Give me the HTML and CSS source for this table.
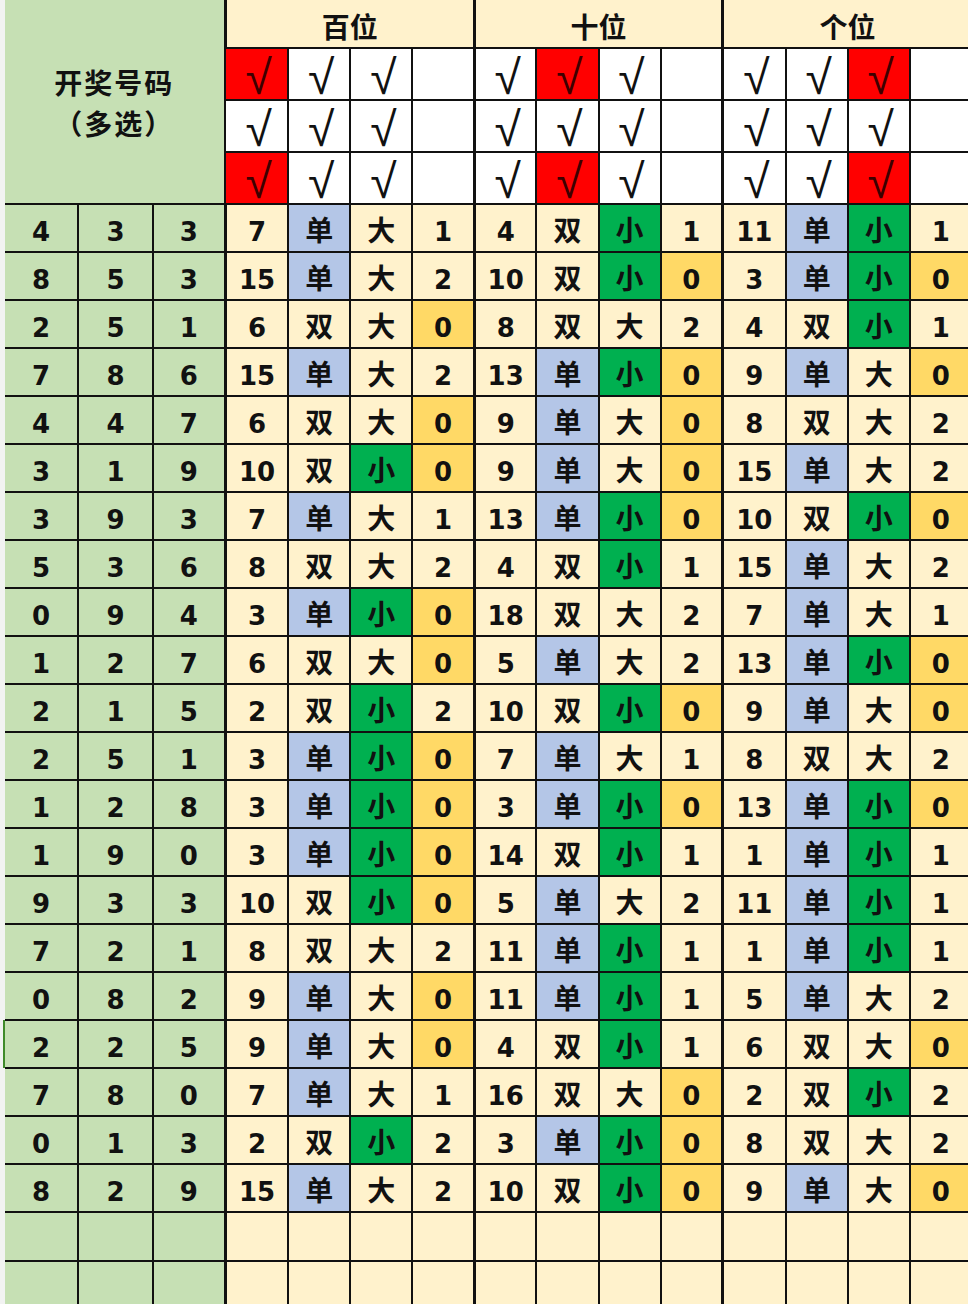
FILE: index.html
```html
<!DOCTYPE html>
<html lang="zh">
<head>
<meta charset="utf-8">
<title>开奖号码</title>
<link rel="stylesheet" href="styles.css">
</head>
<body>
<table class="sheet">
<colgroup>
<col class="w73"><col class="w75"><col class="w72">
<col class="w63"><col class="w62"><col class="w62"><col class="w62">
<col class="w62"><col class="w62"><col class="w62"><col class="w62">
<col class="w63"><col class="w62"><col class="w62"><col class="w62">
</colgroup>
<tbody>
<tr class="hd">
<td class="title" rowspan="4" colspan="3">开奖号码<br>（多选）</td>
<td class="grp s" colspan="4">百位</td>
<td class="grp s" colspan="4">十位</td>
<td class="grp s" colspan="4">个位</td>
</tr>
<tr class="ck">
<td class="r s">√</td><td class="w">√</td><td class="w">√</td><td class="w"></td>
<td class="w s">√</td><td class="r">√</td><td class="w">√</td><td class="w"></td>
<td class="w s">√</td><td class="w">√</td><td class="r">√</td><td class="w"></td>
</tr>
<tr class="ck">
<td class="w s">√</td><td class="w">√</td><td class="w">√</td><td class="w"></td>
<td class="w s">√</td><td class="w">√</td><td class="w">√</td><td class="w"></td>
<td class="w s">√</td><td class="w">√</td><td class="w">√</td><td class="w"></td>
</tr>
<tr class="ck">
<td class="r s">√</td><td class="w">√</td><td class="w">√</td><td class="w"></td>
<td class="w s">√</td><td class="r">√</td><td class="w">√</td><td class="w"></td>
<td class="w s">√</td><td class="w">√</td><td class="r">√</td><td class="w"></td>
</tr>

<tr class="d"><td class="g">4</td><td class="g">3</td><td class="g">3</td>
<td class="c s">7</td><td class="b h">单</td><td class="c h">大</td><td class="c">1</td>
<td class="c s">4</td><td class="c h">双</td><td class="k h">小</td><td class="c">1</td>
<td class="c s">11</td><td class="b h">单</td><td class="k h">小</td><td class="c">1</td></tr>

<tr class="d"><td class="g">8</td><td class="g">5</td><td class="g">3</td>
<td class="c s">15</td><td class="b h">单</td><td class="c h">大</td><td class="c">2</td>
<td class="c s">10</td><td class="c h">双</td><td class="k h">小</td><td class="y">0</td>
<td class="c s">3</td><td class="b h">单</td><td class="k h">小</td><td class="y">0</td></tr>

<tr class="d"><td class="g">2</td><td class="g">5</td><td class="g">1</td>
<td class="c s">6</td><td class="c h">双</td><td class="c h">大</td><td class="y">0</td>
<td class="c s">8</td><td class="c h">双</td><td class="c h">大</td><td class="c">2</td>
<td class="c s">4</td><td class="c h">双</td><td class="k h">小</td><td class="c">1</td></tr>

<tr class="d"><td class="g">7</td><td class="g">8</td><td class="g">6</td>
<td class="c s">15</td><td class="b h">单</td><td class="c h">大</td><td class="c">2</td>
<td class="c s">13</td><td class="b h">单</td><td class="k h">小</td><td class="y">0</td>
<td class="c s">9</td><td class="b h">单</td><td class="c h">大</td><td class="y">0</td></tr>

<tr class="d"><td class="g">4</td><td class="g">4</td><td class="g">7</td>
<td class="c s">6</td><td class="c h">双</td><td class="c h">大</td><td class="y">0</td>
<td class="c s">9</td><td class="b h">单</td><td class="c h">大</td><td class="y">0</td>
<td class="c s">8</td><td class="c h">双</td><td class="c h">大</td><td class="c">2</td></tr>

<tr class="d"><td class="g">3</td><td class="g">1</td><td class="g">9</td>
<td class="c s">10</td><td class="c h">双</td><td class="k h">小</td><td class="y">0</td>
<td class="c s">9</td><td class="b h">单</td><td class="c h">大</td><td class="y">0</td>
<td class="c s">15</td><td class="b h">单</td><td class="c h">大</td><td class="c">2</td></tr>

<tr class="d"><td class="g">3</td><td class="g">9</td><td class="g">3</td>
<td class="c s">7</td><td class="b h">单</td><td class="c h">大</td><td class="c">1</td>
<td class="c s">13</td><td class="b h">单</td><td class="k h">小</td><td class="y">0</td>
<td class="c s">10</td><td class="c h">双</td><td class="k h">小</td><td class="y">0</td></tr>

<tr class="d"><td class="g">5</td><td class="g">3</td><td class="g">6</td>
<td class="c s">8</td><td class="c h">双</td><td class="c h">大</td><td class="c">2</td>
<td class="c s">4</td><td class="c h">双</td><td class="k h">小</td><td class="c">1</td>
<td class="c s">15</td><td class="b h">单</td><td class="c h">大</td><td class="c">2</td></tr>

<tr class="d"><td class="g">0</td><td class="g">9</td><td class="g">4</td>
<td class="c s">3</td><td class="b h">单</td><td class="k h">小</td><td class="y">0</td>
<td class="c s">18</td><td class="c h">双</td><td class="c h">大</td><td class="c">2</td>
<td class="c s">7</td><td class="b h">单</td><td class="c h">大</td><td class="c">1</td></tr>

<tr class="d"><td class="g">1</td><td class="g">2</td><td class="g">7</td>
<td class="c s">6</td><td class="c h">双</td><td class="c h">大</td><td class="y">0</td>
<td class="c s">5</td><td class="b h">单</td><td class="c h">大</td><td class="c">2</td>
<td class="c s">13</td><td class="b h">单</td><td class="k h">小</td><td class="y">0</td></tr>

<tr class="d"><td class="g">2</td><td class="g">1</td><td class="g">5</td>
<td class="c s">2</td><td class="c h">双</td><td class="k h">小</td><td class="c">2</td>
<td class="c s">10</td><td class="c h">双</td><td class="k h">小</td><td class="y">0</td>
<td class="c s">9</td><td class="b h">单</td><td class="c h">大</td><td class="y">0</td></tr>

<tr class="d"><td class="g">2</td><td class="g">5</td><td class="g">1</td>
<td class="c s">3</td><td class="b h">单</td><td class="k h">小</td><td class="y">0</td>
<td class="c s">7</td><td class="b h">单</td><td class="c h">大</td><td class="c">1</td>
<td class="c s">8</td><td class="c h">双</td><td class="c h">大</td><td class="c">2</td></tr>

<tr class="d"><td class="g">1</td><td class="g">2</td><td class="g">8</td>
<td class="c s">3</td><td class="b h">单</td><td class="k h">小</td><td class="y">0</td>
<td class="c s">3</td><td class="b h">单</td><td class="k h">小</td><td class="y">0</td>
<td class="c s">13</td><td class="b h">单</td><td class="k h">小</td><td class="y">0</td></tr>

<tr class="d"><td class="g">1</td><td class="g">9</td><td class="g">0</td>
<td class="c s">3</td><td class="b h">单</td><td class="k h">小</td><td class="y">0</td>
<td class="c s">14</td><td class="c h">双</td><td class="k h">小</td><td class="c">1</td>
<td class="c s">1</td><td class="b h">单</td><td class="k h">小</td><td class="c">1</td></tr>

<tr class="d"><td class="g">9</td><td class="g">3</td><td class="g">3</td>
<td class="c s">10</td><td class="c h">双</td><td class="k h">小</td><td class="y">0</td>
<td class="c s">5</td><td class="b h">单</td><td class="c h">大</td><td class="c">2</td>
<td class="c s">11</td><td class="b h">单</td><td class="k h">小</td><td class="c">1</td></tr>

<tr class="d"><td class="g">7</td><td class="g">2</td><td class="g">1</td>
<td class="c s">8</td><td class="c h">双</td><td class="c h">大</td><td class="c">2</td>
<td class="c s">11</td><td class="b h">单</td><td class="k h">小</td><td class="c">1</td>
<td class="c s">1</td><td class="b h">单</td><td class="k h">小</td><td class="c">1</td></tr>

<tr class="d"><td class="g">0</td><td class="g">8</td><td class="g">2</td>
<td class="c s">9</td><td class="b h">单</td><td class="c h">大</td><td class="y">0</td>
<td class="c s">11</td><td class="b h">单</td><td class="k h">小</td><td class="c">1</td>
<td class="c s">5</td><td class="b h">单</td><td class="c h">大</td><td class="c">2</td></tr>

<tr class="d"><td class="g sel">2</td><td class="g">2</td><td class="g">5</td>
<td class="c s">9</td><td class="b h">单</td><td class="c h">大</td><td class="y">0</td>
<td class="c s">4</td><td class="c h">双</td><td class="k h">小</td><td class="c">1</td>
<td class="c s">6</td><td class="c h">双</td><td class="c h">大</td><td class="y">0</td></tr>

<tr class="d"><td class="g">7</td><td class="g">8</td><td class="g">0</td>
<td class="c s">7</td><td class="b h">单</td><td class="c h">大</td><td class="c">1</td>
<td class="c s">16</td><td class="c h">双</td><td class="c h">大</td><td class="y">0</td>
<td class="c s">2</td><td class="c h">双</td><td class="k h">小</td><td class="c">2</td></tr>

<tr class="d"><td class="g">0</td><td class="g">1</td><td class="g">3</td>
<td class="c s">2</td><td class="c h">双</td><td class="k h">小</td><td class="c">2</td>
<td class="c s">3</td><td class="b h">单</td><td class="k h">小</td><td class="y">0</td>
<td class="c s">8</td><td class="c h">双</td><td class="c h">大</td><td class="c">2</td></tr>

<tr class="d"><td class="g">8</td><td class="g">2</td><td class="g">9</td>
<td class="c s">15</td><td class="b h">单</td><td class="c h">大</td><td class="c">2</td>
<td class="c s">10</td><td class="c h">双</td><td class="k h">小</td><td class="y">0</td>
<td class="c s">9</td><td class="b h">单</td><td class="c h">大</td><td class="y">0</td></tr>

<tr class="e"><td class="g"></td><td class="g"></td><td class="g"></td>
<td class="c s"></td><td class="c"></td><td class="c"></td><td class="c"></td>
<td class="c s"></td><td class="c"></td><td class="c"></td><td class="c"></td>
<td class="c s"></td><td class="c"></td><td class="c"></td><td class="c"></td></tr>

<tr class="e"><td class="g"></td><td class="g"></td><td class="g"></td>
<td class="c s"></td><td class="c"></td><td class="c"></td><td class="c"></td>
<td class="c s"></td><td class="c"></td><td class="c"></td><td class="c"></td>
<td class="c s"></td><td class="c"></td><td class="c"></td><td class="c"></td></tr>
</tbody>
</table>
</body>
</html>
```

FILE: styles.css
```css
html, body {
  margin: 0;
  padding: 0;
  background: #f2f3f2;
  overflow: hidden;
}

.sheet {
  margin-left: 5px;
  border-collapse: collapse;
  table-layout: fixed;
  width: 968px;
  font-family: "DejaVu Sans", "Noto Sans CJK SC", sans-serif;
  font-weight: bold;
  color: #111;
}

.w73 { width: 73px; }
.w75 { width: 75px; }
.w72 { width: 72px; }
.w63 { width: 63px; }
.w62 { width: 62px; }

.sheet td {
  border: 2px solid #111;
  padding: 0;
  text-align: center;
  vertical-align: middle;
  line-height: 1;
  font-size: 26px;
}

.sheet td.s {
  border-left: 3px solid #111;
}

.sheet tr:first-child td {
  border-top: none;
}

.sheet td:first-child {
  border-left: none;
}

.hd { height: 48px; }
.ck { height: 52px; }
.d { height: 48px; }
.e { height: 49px; }

.sheet .d td {
  padding-top: 7px;
}

.sheet .d td.h {
  font-family: "Noto Sans CJK SC", sans-serif;
  font-size: 28px;
  padding-top: 2px;
}

.sheet td.title {
  background: #c6e0b4;
  font-family: "Noto Sans CJK SC", sans-serif;
  font-size: 28px;
  letter-spacing: 2px;
  line-height: 41px;
  padding: 2px 0 0;
}

.sheet td.grp {
  background: #fff2cc;
  font-family: "Noto Sans CJK SC", sans-serif;
  font-size: 28px;
  padding-top: 4px;
}

.sheet .ck td {
  font-family: "Liberation Sans", sans-serif;
  font-size: 48px;
  font-weight: normal;
  line-height: 40px;
  padding-top: 8px;
  padding-left: 4px;
}

.g { background: #c6e0b4; }
.c { background: #fff2cc; }
.b { background: #b4c6e7; }
.k { background: #00b050; }
.y { background: #ffd966; }
.w { background: #ffffff; }
.r { background: #ff0000; color: #3d0000; }

.sel {
  box-shadow: -2px 0 0 #3f8a2a;
}
```
